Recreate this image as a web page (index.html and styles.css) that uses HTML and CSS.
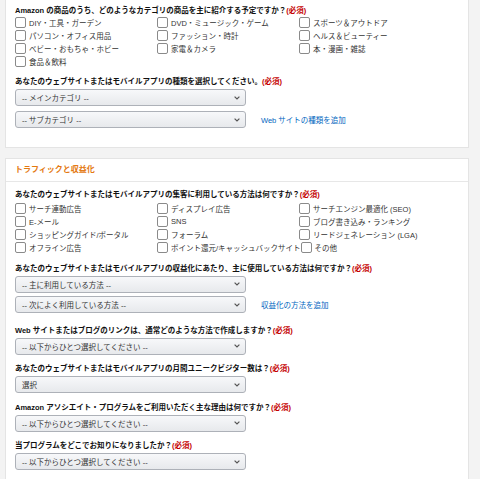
FILE: index.html
```html
<!DOCTYPE html>
<html lang="ja">
<head>
<meta charset="utf-8">
<title>アソシエイト登録</title>
<link rel="stylesheet" href="styles.css">
</head>
<body>
<div class="page">
  <section class="card card-first">
    <div class="card-body">
      <div class="q">Amazon の商品のうち、どのようなカテゴリの商品を主に紹介する予定ですか？<span class="req">(必須)</span></div>
      <div class="checks">
        <label class="ck"><span class="box"></span>DIY・工具・ガーデン</label>
        <label class="ck"><span class="box"></span>DVD・ミュージック・ゲーム</label>
        <label class="ck"><span class="box"></span>スポーツ＆アウトドア</label>
        <label class="ck"><span class="box"></span>パソコン・オフィス用品</label>
        <label class="ck"><span class="box"></span>ファッション・時計</label>
        <label class="ck"><span class="box"></span>ヘルス＆ビューティー</label>
        <label class="ck"><span class="box"></span>ベビー・おもちゃ・ホビー</label>
        <label class="ck"><span class="box"></span>家電＆カメラ</label>
        <label class="ck"><span class="box"></span>本・漫画・雑誌</label>
        <label class="ck"><span class="box"></span>食品＆飲料</label>
      </div>
      <div class="q q-gap">あなたのウェブサイトまたはモバイルアプリの種類を選択してください。<span class="req">(必須)</span></div>
      <div class="sel-row"><div class="sel"><span>-- メインカテゴリ --</span><svg class="chev" width="6" height="4" viewBox="0 0 6 4"><path d="M0.6 0.6 L3 3 L5.4 0.6" fill="none" stroke="#555" stroke-width="1.2"/></svg></div></div>
      <div class="sel-row sel-row-2"><div class="sel"><span>-- サブカテゴリ --</span><svg class="chev" width="6" height="4" viewBox="0 0 6 4"><path d="M0.6 0.6 L3 3 L5.4 0.6" fill="none" stroke="#555" stroke-width="1.2"/></svg></div><a class="link" href="#">Web サイトの種類を追加</a></div>
    </div>
  </section>

  <section class="card card-second">
    <h2 class="card-head">トラフィックと収益化</h2>
    <div class="card-body body-2">
      <div class="q">あなたのウェブサイトまたはモバイルアプリの集客に利用している方法は何ですか？<span class="req">(必須)</span></div>
      <div class="checks checks-2">
        <label class="ck"><span class="box"></span>サーチ連動広告</label>
        <label class="ck"><span class="box"></span>ディスプレイ広告</label>
        <label class="ck"><span class="box"></span>サーチエンジン最適化 (SEO)</label>
        <label class="ck"><span class="box"></span>E-メール</label>
        <label class="ck"><span class="box"></span>SNS</label>
        <label class="ck"><span class="box"></span>ブログ書き込み・ランキング</label>
        <label class="ck"><span class="box"></span>ショッピングガイド/ポータル</label>
        <label class="ck"><span class="box"></span>フォーラム</label>
        <label class="ck"><span class="box"></span>リードジェネレーション (LGA)</label>
        <label class="ck"><span class="box"></span>オフライン広告</label>
        <label class="ck"><span class="box"></span>ポイント還元/キャッシュバックサイト</label>
        <label class="ck"><span class="box"></span>その他</label>
      </div>
      <div class="q q-gap2">あなたのウェブサイトまたはモバイルアプリの収益化にあたり、主に使用している方法は何ですか？<span class="req">(必須)</span></div>
      <div class="sel-row"><div class="sel"><span>-- 主に利用している方法 --</span><svg class="chev" width="6" height="4" viewBox="0 0 6 4"><path d="M0.6 0.6 L3 3 L5.4 0.6" fill="none" stroke="#555" stroke-width="1.2"/></svg></div></div>
      <div class="sel-row sel-row-3"><div class="sel"><span>-- 次によく利用している方法 --</span><svg class="chev" width="6" height="4" viewBox="0 0 6 4"><path d="M0.6 0.6 L3 3 L5.4 0.6" fill="none" stroke="#555" stroke-width="1.2"/></svg></div><a class="link" href="#">収益化の方法を追加</a></div>

      <div class="field field-first">
        <div class="q">Web サイトまたはブログのリンクは、通常どのような方法で作成しますか？<span class="req">(必須)</span></div>
        <div class="sel-row"><div class="sel"><span>-- 以下からひとつ選択してください --</span><svg class="chev" width="6" height="4" viewBox="0 0 6 4"><path d="M0.6 0.6 L3 3 L5.4 0.6" fill="none" stroke="#555" stroke-width="1.2"/></svg></div></div>
      </div>
      <div class="field">
        <div class="q">あなたのウェブサイトまたはモバイルアプリの月間ユニークビジター数は？<span class="req">(必須)</span></div>
        <div class="sel-row"><div class="sel"><span>選択</span><svg class="chev" width="6" height="4" viewBox="0 0 6 4"><path d="M0.6 0.6 L3 3 L5.4 0.6" fill="none" stroke="#555" stroke-width="1.2"/></svg></div></div>
      </div>
      <div class="field">
        <div class="q">Amazon アソシエイト・プログラムをご利用いただく主な理由は何ですか？<span class="req">(必須)</span></div>
        <div class="sel-row"><div class="sel"><span>-- 以下からひとつ選択してください --</span><svg class="chev" width="6" height="4" viewBox="0 0 6 4"><path d="M0.6 0.6 L3 3 L5.4 0.6" fill="none" stroke="#555" stroke-width="1.2"/></svg></div></div>
      </div>
      <div class="field">
        <div class="q">当プログラムをどこでお知りになりましたか？<span class="req">(必須)</span></div>
        <div class="sel-row"><div class="sel"><span>-- 以下からひとつ選択してください --</span><svg class="chev" width="6" height="4" viewBox="0 0 6 4"><path d="M0.6 0.6 L3 3 L5.4 0.6" fill="none" stroke="#555" stroke-width="1.2"/></svg></div></div>
      </div>
    </div>
  </section>
</div>
</body>
</html>
```

FILE: styles.css
```css
html, body {
  margin: 0;
  padding: 0;
  background: #f3f3f3;
  height: 100%;
  overflow: hidden;
}
body {
  font-family: "Liberation Sans", "Noto Sans CJK JP", sans-serif;
  font-size: 7.5px;
  color: #333;
}
.page {
  padding: 0 11px 0 5px;
}
.card {
  background: #fff;
  border: 1px solid #e4e4e4;
  width: 462px;
}
.card-first {
  border-top: 0;
}
.card-second {
  margin-top: 10px;
  min-height: 400px;
}
.card-body {
  padding: 4.5px 9px 19px;
}
.body-2 {
  padding-top: 7px;
}
.card-head {
  margin: 0;
  padding: 0 9px;
  height: 22px;
  line-height: 22px;
  font-size: 8px;
  font-weight: bold;
  color: #e47911;
  border-bottom: 1px solid #e7e7e7;
}
.q {
  font-weight: bold;
  color: #111;
  line-height: 11px;
  white-space: nowrap;
}
.req {
  color: #c40000;
}
.q-gap {
  margin-top: 8.5px;
}
.q-gap2 {
  margin-top: 9px;
}
.checks {
  display: flex;
  flex-wrap: wrap;
}
.checks-2 {
  margin-top: 1.5px;
}
.ck {
  display: flex;
  align-items: center;
  min-width: 142px;
  height: 13px;
  white-space: nowrap;
  color: #333;
}
.box {
  width: 9px;
  height: 9px;
  border: 1px solid #8a8a8a;
  border-radius: 2px;
  background: #fff;
  margin-right: 3px;
  flex: none;
}
.sel-row {
  display: flex;
  align-items: center;
  margin-top: 2px;
}
.sel-row-2 {
  margin-top: 5px;
}
.sel-row-3 {
  margin-top: 3.5px;
}
.sel {
  box-sizing: border-box;
  width: 231px;
  height: 17px;
  border: 1px solid #adb1b8;
  border-radius: 3px;
  background: linear-gradient(#f7f8fa, #e7e9ec);
  display: flex;
  align-items: center;
  justify-content: space-between;
  padding: 0 5px 0 6px;
  color: #333;
  white-space: nowrap;
}
.chev {
  display: block;
}
.link {
  margin-left: 15px;
  color: #0066c0;
  text-decoration: none;
  white-space: nowrap;
}
.field {
  margin-top: 8.5px;
}
.field-first {
  margin-top: 11.5px;
}
```
